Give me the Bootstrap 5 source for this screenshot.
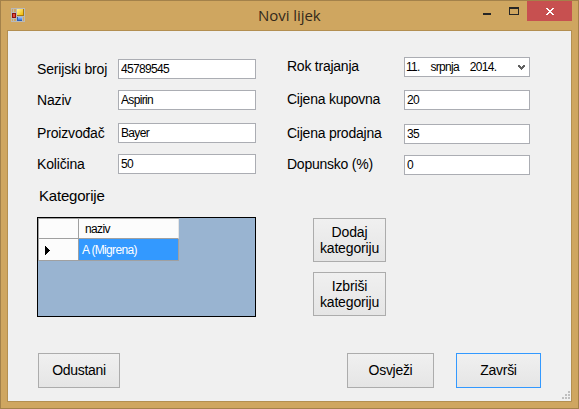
<!DOCTYPE html>
<html lang="hr">
<head>
<meta charset="utf-8">
<title>Novi lijek</title>
<link href="https://cdn.jsdelivr.net/npm/bootstrap@5.3.0/dist/css/bootstrap.min.css" rel="stylesheet">
<style>
body { font-family: "Liberation Sans", Arial, sans-serif; font-size: 14px; line-height: 20px; color: #000; }
.window { width: 579px; height: 409px; background: #cfa660; border: 1px solid #a3814a; }
.titlebar { height: 29px; }
.app-icon { margin: 7px 0 0 10px; }
.caption-text { font: 15px/28px "Open Sans", sans-serif; letter-spacing: -.05px; color: #33291b; padding: 0 0 0 233px; }
.win-btn { border: 0; padding: 0; background: none; height: 20px; }
.btn-min { width: 30px; } .btn-max { width: 24px; }
.btn-x { width: 45px; background: #c75050; margin-right: 6px; }
.client { width: 565px; height: 372px; margin-left: 6px; background: #f0f0f0; border: 1px solid #b38f51; }
.fields { padding: 26px 0 0 29px; }
.fields-left { width: 219px; padding-top: 2px; }
.fields-right { width: 243px; margin-left: 31px; }
.f-label { letter-spacing: -.17px; white-space: nowrap; }
.fields-left .f-label { width: 81px; }
.fields-right .f-label { width: 117px; line-height: 18px; letter-spacing: -.24px; }
.f-row { height: 20px; }
.f-input { height: 20px; min-height: 0; padding: 0 2px; border: 1px solid #abadb3; border-radius: 0; font-size: 12px; line-height: 18px; letter-spacing: -.67px; color: #000; background: #fff; box-shadow: none !important; }
.mt-11 { margin-top: 11px; } .mt-13 { margin-top: 13px; } .mt-14 { margin-top: 14px; }
.date-box { white-space: pre; padding-left: 1px; }
.section-title { font-size: 15px; line-height: 20px; margin: 11px 0 0 31px; letter-spacing: -.2px; }
.lower { margin: 11px 0 0 29px; }
.data-grid { width: 219px; height: 100px; border: 1px solid #000; background: #99b4d1; }
.grid-table { width: 141px; border-left: 1px solid #a0a0a0; border-top: 1px solid #a0a0a0; font-size: 12px; letter-spacing: -.65px; }
.g-cell { background: #fcfcfc; border-right: 1px solid #a0a0a0; border-bottom: 1px solid #a0a0a0; }
.g-head { width: 40px; } .g-name { width: 100px; }
.g-r1 { height: 20px; line-height: 20px; } .g-r2 { height: 22px; line-height: 22px; }
.g-r1 .g-name { padding-left: 6px; border-right-color: #e5e5e5; }
.g-r2 .g-name { padding-left: 3px; background: #3399ff; color: #fff; }
.w-btn { border: 1px solid #acacac; border-radius: 0; padding: 0; background: linear-gradient(#f0f0f0, #e5e5e5); color: #000; font-size: 14px; line-height: 16px; letter-spacing: -.3px; }
.side { margin: 1px 0 0 57px; gap: 10px; }
.side .w-btn { width: 73px; height: 44px; letter-spacing: -.15px; }
.footer-row { margin: 36px 0 0 30px; }
.footer-row .w-btn { height: 35px; padding-bottom: 2px; }
.b-odustani { width: 82px; } .b-osvjezi { width: 87px; margin-left: 227px; }
.footer-row .b-zavrsi { width: 85px; margin-left: 22px; border-color: #3399ff; }
.grip { right: 1px; bottom: 2px; }
</style>
</head>
<body>
<div class="window">
  <div class="titlebar d-flex align-items-start">
    <svg class="app-icon flex-shrink-0" width="14" height="14" shape-rendering="crispEdges">
      <defs>
        <linearGradient id="gy" x2="1" y2="1"><stop stop-color="#fff3a0"/><stop offset="1" stop-color="#f0b800"/></linearGradient>
        <linearGradient id="gb" x2="0" y2="1"><stop stop-color="#9cc4ff"/><stop offset="1" stop-color="#3a78e0"/></linearGradient>
      </defs>
      <path fill="#b9b9b9" d="M0 0h14v14H0z"/>
      <path fill="#cfa660" d="M1 1h1v3H1zM3 1h2v3H3zM1 11h1v2H1zM3 11h2v2H3zM12 9h1v4h-1z"/>
      <path fill="#8b1111" d="M1 5h4v5H1z"/><path fill="#e04a3a" d="M2 6h2v3H2z"/>
      <path fill="#a87a10" d="M6 1h7v7H6z"/><path fill="url(#gy)" d="M6 1h6v6H6z"/>
      <path fill="#2d5fb5" d="M6 9h5v4H6z"/><path fill="url(#gb)" d="M7 9h4v3H7z"/>
    </svg>
    <div class="caption-text flex-grow-1 text-nowrap">Novi lijek</div>
    <button class="win-btn btn-min d-flex" aria-label="Minimize"><svg width="30" height="20"><path fill="#262626" d="M10 12h8v2h-8z"/></svg></button>
    <button class="win-btn btn-max d-flex" aria-label="Maximize"><svg width="24" height="20"><path fill="#262626" fill-rule="evenodd" d="M6 6h10v8H6zM7 8v5h8V8z"/></svg></button>
    <button class="win-btn btn-x d-flex" aria-label="Close"><svg width="45" height="20" shape-rendering="crispEdges"><path fill="#fff" d="M19 7h2v1h1v1h2V8h1V7h2v1h-1v1h-1v1h-1v1h1v1h1v1h1v1h-2v-1h-1v-1h-2v1h-1v1h-2v-1h1v-1h1v-1h1v-1h-1V9h-1V8h-1z"/></svg></button>
  </div>
  <div class="client position-relative">
    <div class="fields d-flex align-items-start">
      <div class="fields-left d-flex flex-column">
        <div class="f-row d-flex"><label class="f-label flex-shrink-0">Serijski broj</label><input class="form-control f-input" value="45789545"></div>
        <div class="f-row d-flex mt-11"><label class="f-label flex-shrink-0">Naziv</label><input class="form-control f-input" value="Aspirin"></div>
        <div class="f-row d-flex mt-13"><label class="f-label flex-shrink-0">Proizvođač</label><input class="form-control f-input" value="Bayer"></div>
        <div class="f-row d-flex mt-11"><label class="f-label flex-shrink-0">Količina</label><input class="form-control f-input" value="50"></div>
      </div>
      <div class="fields-right d-flex flex-column">
        <div class="f-row d-flex"><label class="f-label flex-shrink-0">Rok trajanja</label>
          <div class="form-control f-input date-box d-flex"><span class="d-day">11.</span><span class="d-month">    srpnja</span><span class="d-year">    2014.</span><svg class="ms-auto" width="11" height="18" shape-rendering="crispEdges"><path fill="#606060" d="M2 7h2v1h1v1h1V8h1V7h2v2H8v1H7v1H6v1H5v-1H4v-1H3V9H2z"/></svg></div></div>
        <div class="f-row d-flex mt-13"><label class="f-label flex-shrink-0">Cijena kupovna</label><input class="form-control f-input" value="20"></div>
        <div class="f-row d-flex mt-14"><label class="f-label flex-shrink-0">Cijena prodajna</label><input class="form-control f-input" value="35"></div>
        <div class="f-row d-flex mt-11"><label class="f-label flex-shrink-0">Dopunsko (%)</label><input class="form-control f-input" value="0"></div>
      </div>
    </div>
    <div class="section-title">Kategorije</div>
    <div class="lower d-flex align-items-start">
      <div class="data-grid">
        <div class="grid-table">
          <div class="d-flex g-r1"><div class="g-cell g-head"></div><div class="g-cell g-name">naziv</div></div>
          <div class="d-flex g-r2"><div class="g-cell g-head d-flex"><svg width="20" height="21" shape-rendering="crispEdges"><path d="M6 7h1v1h1v1h1v1h1v1h1v1h-1v1H9v1H8v1H7v1H6z"/></svg></div><div class="g-cell g-name">A (Migrena)</div></div>
        </div>
      </div>
      <div class="side d-flex flex-column">
        <button class="btn w-btn">Dodaj<br>kategoriju</button>
        <button class="btn w-btn">Izbriši<br>kategoriju</button>
      </div>
    </div>
    <div class="footer-row d-flex">
      <button class="btn w-btn b-odustani">Odustani</button>
      <button class="btn w-btn b-osvjezi">Osvježi</button>
      <button class="btn w-btn b-zavrsi">Završi</button>
    </div>
    <svg class="grip position-absolute" width="8" height="8"><path fill="#bfbfbf" d="M6 0h2v2H6zM3 3h2v2H3zM6 3h2v2H6zM0 6h2v2H0zM3 6h2v2H3zM6 6h2v2H6z"/></svg>
  </div>
</div>
<script src="https://cdn.jsdelivr.net/npm/bootstrap@5.3.0/dist/js/bootstrap.bundle.min.js"></script>
</body>
</html>
